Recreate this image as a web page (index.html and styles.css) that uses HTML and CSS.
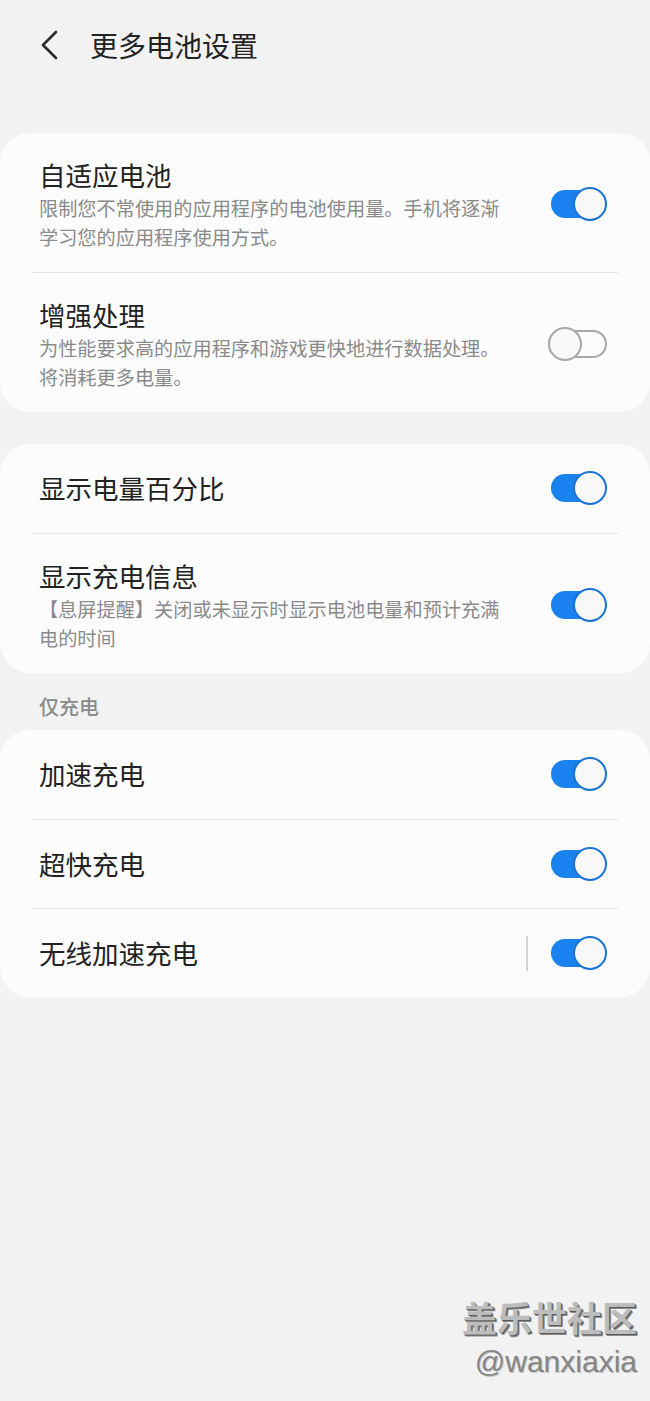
FILE: index.html
```html
<!DOCTYPE html>
<html lang="zh-CN">
<head>
    <meta charset="UTF-8">
    <meta name="viewport" content="width=device-width, initial-scale=1.0">
    <title>更多电池设置</title>
    <link rel="stylesheet" href="styles.css">
</head>
<body>
    <div class="page">
        <header class="top-bar">
            <svg class="back" width="20" height="30" viewBox="0 0 20 30">
                <path d="M17 2 L4 15 L17 28" fill="none" stroke="#2a2a2a" stroke-width="2.6" stroke-linecap="round" stroke-linejoin="round"/>
            </svg>
            <h1 class="title">更多电池设置</h1>
        </header>

        <section class="card">
            <div class="row">
                <div class="text">
                    <div class="name">自适应电池</div>
                    <div class="desc">限制您不常使用的应用程序的电池使用量。手机将逐渐学习您的应用程序使用方式。</div>
                </div>
                <span class="switch on"></span>
            </div>
            <div class="row">
                <div class="text">
                    <div class="name">增强处理</div>
                    <div class="desc">为性能要求高的应用程序和游戏更快地进行数据处理。将消耗更多电量。</div>
                </div>
                <span class="switch"></span>
            </div>
        </section>

        <section class="card">
            <div class="row single">
                <div class="text">
                    <div class="name">显示电量百分比</div>
                </div>
                <span class="switch on"></span>
            </div>
            <div class="row">
                <div class="text">
                    <div class="name">显示充电信息</div>
                    <div class="desc">【息屏提醒】关闭或未显示时显示电池电量和预计充满电的时间</div>
                </div>
                <span class="switch on"></span>
            </div>
        </section>

        <div class="group-label">仅充电</div>

        <section class="card last">
            <div class="row single">
                <div class="text">
                    <div class="name">加速充电</div>
                </div>
                <span class="switch on"></span>
            </div>
            <div class="row single">
                <div class="text">
                    <div class="name">超快充电</div>
                </div>
                <span class="switch on"></span>
            </div>
            <div class="row single">
                <div class="text">
                    <div class="name">无线加速充电</div>
                </div>
                <span class="bar"></span>
                <span class="switch on"></span>
            </div>
        </section>

        <div class="watermark">
            <div class="wm-big">盖乐世社区</div>
            <div class="wm-small">@wanxiaxia</div>
        </div>
    </div>
</body>
</html>
```

FILE: styles.css
```css
body {
    margin: 0;
    background: #f2f2f2;
    font-family: "Noto Sans CJK SC", "Noto Sans", sans-serif;
    color: #222;
}

.page {
    position: relative;
    width: 650px;
    height: 1401px;
    overflow: hidden;
}

.top-bar {
    display: flex;
    align-items: center;
    height: 90px;
    padding-left: 39px;
}

.back {
    display: block;
    margin-right: 31px;
}

.title {
    margin: 0;
    font-size: 28px;
    font-weight: 400;
    color: #222;
}

.card {
    background: #fcfcfc;
    border-radius: 30px;
    padding: 0 32px;
    margin-top: 43px;
}

.card + .card {
    margin-top: 32px;
}

.row {
    display: flex;
    align-items: center;
    padding: 23px 11px 20px 7px;
    min-height: 96px;
}

.row + .row {
    border-top: 1px solid #e4e4e4;
}

.row.single {
    padding: 25px 11px 26px 7px;
    min-height: 38px;
}

.row + .row.single {
    padding-bottom: 25px;
}

.text {
    flex: 1;
    max-width: 468px;
}

.name {
    font-size: 26.5px;
    line-height: 38px;
}

.desc {
    font-size: 19.2px;
    line-height: 29px;
    color: #8a8a8a;
}

.switch {
    position: relative;
    width: 59px;
    height: 34px;
    margin-left: auto;
    flex-shrink: 0;
}

.switch::before {
    content: "";
    position: absolute;
    left: 0;
    right: 0;
    top: 3px;
    height: 28px;
    border-radius: 15px;
    box-sizing: border-box;
    border: 2px solid #a8a8a8;
    background: #fcfcfc;
}

.switch::after {
    content: "";
    position: absolute;
    left: 0;
    top: 0;
    width: 34px;
    height: 34px;
    border-radius: 50%;
    box-sizing: border-box;
    border: 2px solid #a8a8a8;
    background: #f8f8f8;
}

.switch.on::before {
    left: 3px;
    right: 6px;
    border: none;
    background: #1a82f0;
}

.switch.on::after {
    left: auto;
    right: 0;
    border-color: #1a74d8;
}

.bar {
    width: 2px;
    height: 35px;
    background: #d2d2d2;
    margin-left: auto;
    margin-right: 20px;
}

.bar + .switch {
    margin-left: 0;
}

.group-label {
    padding: 20px 39px 0;
    height: 37px;
    font-size: 20px;
    font-weight: 500;
    line-height: 28px;
    color: #8a8a8a;
}

.card.last {
    margin-top: 0;
}

.watermark {
    position: absolute;
    right: 13px;
    top: 1294px;
    text-align: right;
}

.wm-big {
    font-size: 35px;
    font-weight: 700;
    line-height: 46px;
    color: #bcbcbc;
    text-shadow: 1px 1px 0 #5a5a5a, 2px 2px 0 #8a8a8a;
}

.wm-small {
    margin-top: 4px;
    font-family: "Liberation Sans", "Noto Sans", sans-serif;
    font-size: 30px;
    line-height: 36px;
    color: #858585;
    text-shadow: 1px 1px 0 #c4c4c4;
}
```
